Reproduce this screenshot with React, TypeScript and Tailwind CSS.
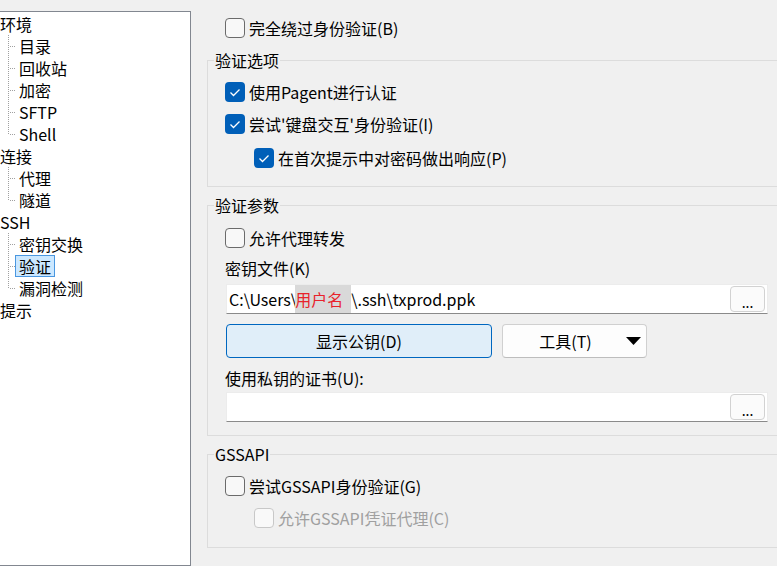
import React from "react";

const FONT = { fontFamily: '"Noto Sans CJK SC", "Noto Sans", sans-serif' };

function CheckBox({ checked = false, disabled = false }: { checked?: boolean; disabled?: boolean }) {
  if (checked) {
    return (
      <span className="w-[20px] h-[20px] rounded-[4px] bg-[#005fb8] shrink-0 flex">
        <svg width="20" height="20" viewBox="0 0 20 20">
          <path d="M5.5 10.5 L8.5 13.5 L14.5 7.5" stroke="#ffffff" strokeWidth="1.3" fill="none" />
        </svg>
      </span>
    );
  }
  if (disabled) {
    return <span className="w-[20px] h-[20px] rounded-[4px] border border-[#c8c8c8] bg-[#f9f9f9] shrink-0" />;
  }
  return <span className="w-[20px] h-[20px] rounded-[4px] border border-[#6b6b6b] bg-[#f8f8f8] shrink-0" />;
}

function CheckRow({
  label,
  checked,
  disabled,
  indent,
  className = "",
}: {
  label: string;
  checked?: boolean;
  disabled?: boolean;
  indent?: boolean;
  className?: string;
}) {
  return (
    <div className={"flex items-center h-[20px] gap-[4px] " + (indent ? "pl-[46px] " : "pl-[17px] ") + className}>
      <CheckBox checked={checked} disabled={disabled} />
      <span className={"text-[16px] leading-[22px] whitespace-nowrap " + (disabled ? "text-[#a0a0a0]" : "text-black")}>
        {label}
      </span>
    </div>
  );
}

function Group({ title, className = "", children }: { title: string; className?: string; children: React.ReactNode }) {
  return (
    <div className={"relative border border-[#dcdcdc] " + className}>
      <span className="absolute left-[6px] top-[-12px] h-[22px] leading-[22px] text-[16px] px-px bg-[#f0f0f0] text-black whitespace-nowrap">
        {title}
      </span>
      {children}
    </div>
  );
}

function Connector({ last }: { last?: boolean }) {
  return (
    <svg width="15" height="22" viewBox="0 0 15 22" className="shrink-0">
      <line x1="8.5" y1="0" x2="8.5" y2={last ? 11 : 22} stroke="#a0a0a0" strokeWidth="1" strokeDasharray="1 1" />
      <line x1="10" y1="11.5" x2="15" y2="11.5" stroke="#a0a0a0" strokeWidth="1" strokeDasharray="1 1" />
    </svg>
  );
}

function TreeRoot({ label }: { label: string }) {
  return <div className="h-[22px] leading-[22px] text-[16px] text-black whitespace-nowrap">{label}</div>;
}

function TreeChild({ label, last, selected }: { label: string; last?: boolean; selected?: boolean }) {
  return (
    <div className="h-[22px] flex items-stretch">
      <Connector last={last} />
      <span
        className={
          "h-[22px] leading-[20px] text-[16px] text-black px-[3px] border whitespace-nowrap " +
          (selected ? "bg-[#cce8ff] border-[#4a97e0]" : "border-transparent")
        }
      >
        {label}
      </span>
    </div>
  );
}

function TextBox({ children }: { children?: React.ReactNode }) {
  return (
    <div className="w-[542px] h-[30px] bg-white border border-[#ececec] border-b-[#8a8a8a] flex items-center">
      <div className="flex-1 h-full flex items-stretch text-[16px] leading-[28px] whitespace-nowrap pl-[2px] overflow-hidden">
        {children}
      </div>
      <div className="w-[35px] h-[26px] mr-[2px] rounded-[4px] border border-[#d2d2d2] bg-[#fbfbfb] flex items-end justify-center text-[14px] leading-[18px] text-black">
        ...
      </div>
    </div>
  );
}

export default function App() {
  return (
    <div className="w-[777px] h-[566px] bg-[#f0f0f0] flex overflow-hidden" style={FONT}>
      {/* Tree */}
      <div className="pt-[11px] shrink-0">
        <div className="w-[191px] h-[555px] bg-white border-t border-r border-b border-[#828790] pt-[1px]">
          <TreeRoot label="环境" />
          <TreeChild label="目录" />
          <TreeChild label="回收站" />
          <TreeChild label="加密" />
          <TreeChild label="SFTP" />
          <TreeChild label="Shell" last />
          <TreeRoot label="连接" />
          <TreeChild label="代理" />
          <TreeChild label="隧道" last />
          <TreeRoot label="SSH" />
          <TreeChild label="密钥交换" />
          <TreeChild label="验证" selected />
          <TreeChild label="漏洞检测" last />
          <TreeRoot label="提示" />
        </div>
      </div>

      {/* Right side */}
      <div className="ml-[16px] w-[580px] shrink-0 flex flex-col">
        <CheckRow label="完全绕过身份验证(B)" className="mt-[18px] !pl-[18px]" />

        <Group title="验证选项" className="mt-[22px] pt-[21px] pb-[18px]">
          <CheckRow label="使用Pagent进行认证" checked />
          <CheckRow label="尝试'键盘交互'身份验证(I)" checked className="mt-[12px]" />
          <CheckRow label="在首次提示中对密码做出响应(P)" checked indent className="mt-[14px]" />
        </Group>

        <Group title="验证参数" className="mt-[18px] pt-[22px] pb-[13px]">
          <CheckRow label="允许代理转发" />
          <div className="pl-[17px] mt-[9px] h-[22px] leading-[22px] text-[16px] text-black">密钥文件(K)</div>
          <div className="pl-[18px] mt-[5px]">
            <TextBox>
              <span>C:\Users\</span>
              <span className="bg-[#d9d9d9] text-[#e8232b] pr-[8px] -ml-[2px]">用户名</span>
              <span>\.ssh\txprod.ppk</span>
            </TextBox>
          </div>
          <div className="pl-[18px] mt-[10px] flex gap-[10px]">
            <div className="w-[266px] h-[34px] rounded-[4px] border border-[#0067c0] bg-[#e0eef9] flex items-center justify-center text-[16px] text-black">
              显示公钥(D)
            </div>
            <div className="w-[145px] h-[34px] rounded-[4px] border border-[#d0d0d0] border-b-[#bdbdbd] bg-[#fdfdfd] flex items-center text-[16px] text-black">
              <span className="flex-1 text-center pl-[2px]">工具(T)</span>
              <svg width="15" height="8" viewBox="0 0 15 8" className="mr-[5px]">
                <path d="M0 0 L15 0 L7.5 8 Z" fill="#000000" />
              </svg>
            </div>
          </div>
          <div className="pl-[17px] mt-[9px] h-[22px] leading-[22px] text-[16px] text-black">使用私钥的证书(U):</div>
          <div className="pl-[18px] mt-[3px]">
            <TextBox />
          </div>
        </Group>

        <Group title="GSSAPI" className="mt-[18px] pt-[21px] pb-[19px]">
          <CheckRow label="尝试GSSAPI身份验证(G)" />
          <CheckRow label="允许GSSAPI凭证代理(C)" disabled indent className="mt-[12px]" />
        </Group>
      </div>
    </div>
  );
}
